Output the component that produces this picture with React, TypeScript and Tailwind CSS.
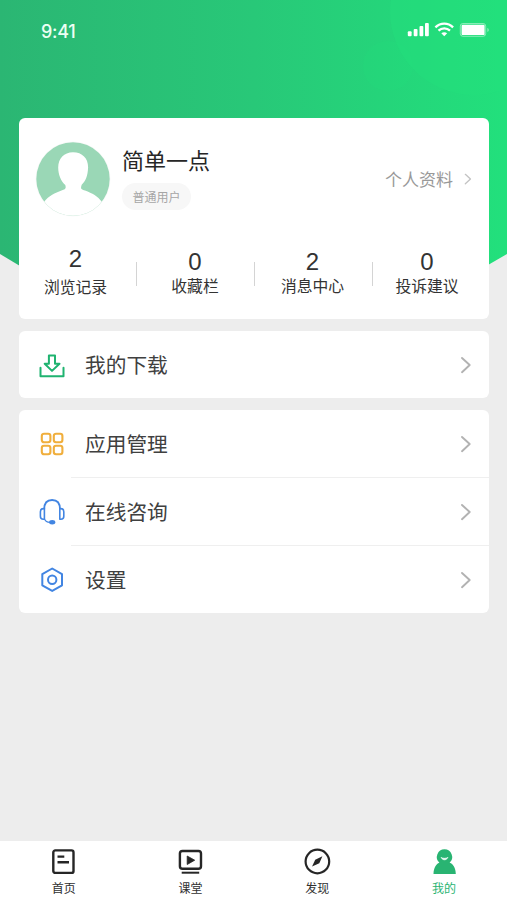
import React from "react";

function Backdrop() {
  return (
    <svg className="absolute left-0 top-0 h-[540px] w-[507px]" viewBox="0 0 507 540" fill="none">
      <defs>
        <linearGradient id="sky" x1="0" y1="0" x2="507" y2="0" gradientUnits="userSpaceOnUse">
          <stop offset="0" stopColor="#2bb673" />
          <stop offset="0.5" stopColor="#28c878" />
          <stop offset="1" stopColor="#22e07c" />
        </linearGradient>
      </defs>
      <path d="M0 0H507V254L488 265L254 300L20 266L0 254Z" fill="url(#sky)" />
      <circle cx="388" cy="66" r="25" fill="#22e07c" fillOpacity="0.2" />
      <circle cx="474" cy="11" r="84" fill="#22e07c" fillOpacity="0.4" />
    </svg>
  );
}

function StatusBar() {
  return (
    <div className="flex h-[118px] items-start justify-between pl-[41px] pr-[17px] pt-[20px] text-white">
      <span className="font-['Inter','Liberation_Sans',sans-serif] text-[18px] font-medium leading-[24px] tracking-[-0.3px] text-[#edfff4]">9:41</span>
      <svg className="mt-[2px] h-[16px] w-[83px]" viewBox="0 0 83 16" fill="currentColor">
        <rect x="0.8" y="9.3" width="3.8" height="5" rx="1" />
        <rect x="6.7" y="7" width="3.8" height="7.3" rx="1" />
        <rect x="12.5" y="4" width="3.8" height="10.3" rx="1" />
        <rect x="18" y="1" width="3.8" height="13.3" rx="1" />
        <g fill="none" stroke="currentColor" strokeWidth="2.3">
          <path d="M28.4 5.3C33.5 0.4 41 0.4 46.1 5.3" />
          <path d="M31.5 8.7C34.7 5.7 39.8 5.7 43 8.7" />
        </g>
        <path d="M34.3 11.3C36.1 9.8 38.4 9.8 40.2 11.3L37.25 14.2Z" />
        <rect x="53.3" y="1.5" width="25.4" height="12.8" rx="2.6" fill="none" stroke="currentColor" strokeOpacity="0.45" />
        <rect x="54.6" y="2.8" width="23" height="10.3" rx="1.2" />
        <path d="M80.3 5.7C82.4 6.8 82.4 9 80.3 10.1Z" opacity="0.45" />
      </svg>
    </div>
  );
}

function Avatar() {
  return (
    <svg className="h-[76px] w-[76px] shrink-0" viewBox="0 0 76 76">
      <defs>
        <clipPath id="face"><circle cx="38" cy="38" r="36.7" /></clipPath>
      </defs>
      <circle cx="38" cy="38" r="37" fill="#fff" stroke="#f7f7f7" strokeWidth="0.8" />
      <g clipPath="url(#face)">
        <rect width="76" height="76" fill="#9ad7b6" />
        <path d="M38 11.2C47.5 11.2 53.3 17.5 53.1 26.5C52.8 35 50.5 40 46.7 43.8C45.3 48 46 48 50 49.5C57.5 52.3 62.5 55 67 61V78H9V61C14 54.5 20 52 26.5 49.5C30.5 48 31.3 47.5 30.3 44C26 40 23.2 34 23.2 26.5C23.2 17.5 29 11.2 38 11.2Z" fill="#fff" />
      </g>
    </svg>
  );
}

function Chevron({ small = false }: { small?: boolean }) {
  return (
    <svg
      className={small ? "h-[12px] w-[8px]" : "h-[18px] w-[12px]"}
      viewBox="0 0 12 18"
      fill="none"
      stroke={small ? "#c3c3c3" : "#b2b2b2"}
      strokeWidth={small ? 2 : 1.9}
      strokeLinecap="round"
      strokeLinejoin="round"
    >
      <path d="M2 2L9.7 9L2 16.2" />
    </svg>
  );
}

function DownloadIcon() {
  return (
    <svg className="h-[28px] w-[28px]" viewBox="0 0 28 28" fill="none" stroke="#1fb370" strokeWidth="2" strokeLinejoin="round" strokeLinecap="round">
      <path d="M10.9 4.5H17V12.7H21.5L14 19.9L6.7 12.7H10.9Z" />
      <path d="M2.5 16.8V25.3H25.5V16.8" />
    </svg>
  );
}

function AppsIcon() {
  return (
    <svg className="h-[28px] w-[28px]" viewBox="0 0 28 28" fill="none" stroke="#f0ae3c" strokeWidth="2.1">
      <rect x="3.8" y="3.7" width="8.6" height="8.6" rx="2.2" />
      <rect x="15.8" y="3.7" width="8.6" height="8.6" rx="2.2" />
      <rect x="3.8" y="15.7" width="8.6" height="8.6" rx="2.2" />
      <rect x="15.8" y="15.7" width="8.6" height="8.6" rx="2.2" />
    </svg>
  );
}

function HeadsetIcon() {
  return (
    <svg className="h-[28px] w-[28px]" viewBox="0 0 28 28" fill="none" stroke="#4285e2" strokeWidth="1.8">
      <path d="M6.2 11.3C6.2 5.3 9.3 2 14.1 2C18.9 2 22 5.3 22 11.3" />
      <path d="M6.4 10.6V21.2H5.3C3.3 21.2 2.4 20 2.4 18.2V13.8C2.4 11.8 3.3 10.6 5.3 10.6ZM21.8 10.6V21.2H22.9C24.9 21.2 25.8 20 25.8 18.2V13.8C25.8 11.8 24.9 10.6 22.9 10.6Z" strokeWidth="1.6" strokeLinejoin="round" />
      <path d="M6.5 21C7.2 23 9 24.3 12 24.3" strokeWidth="1.2" />
      <ellipse cx="14.2" cy="24.2" rx="3.1" ry="2.2" fill="#4285e2" stroke="none" />
    </svg>
  );
}

function SettingsIcon() {
  return (
    <svg className="h-[28px] w-[28px]" viewBox="0 0 28 28" fill="none" stroke="#4285e2" strokeWidth="2" strokeLinejoin="round">
      <path d="M14.2 2.5L24 8.2V19.3L14.2 24.9L4.3 19.3V8.2Z" />
      <circle cx="14.2" cy="13.7" r="4.2" />
    </svg>
  );
}

function Row({ icon, label, divider = false }: { icon: React.ReactNode; label: string; divider?: boolean }) {
  return (
    <div className="flex h-[68px] pl-[19px]">
      <div className="flex w-[33px] items-center">{icon}</div>
      <div className={`flex flex-1 items-center justify-between pl-[14px] pr-[17px] ${divider ? "border-b border-[#efefef]" : ""}`}>
        <span className="pb-[2px] text-[20.7px] leading-[30px] text-[#404040]">{label}</span>
        <Chevron />
      </div>
    </div>
  );
}

const stats = [
  { value: "2", label: "浏览记录", box: "w-[118px] pr-[5px] pt-[6px]", number: "mb-[3px]" },
  { value: "0", label: "收藏栏", box: "w-[118px] pr-[2px] pt-[9px]", number: "-mb-px" },
  { value: "2", label: "消息中心", box: "w-[118px] pr-[3px] pt-[9px]", number: "-mb-px" },
  { value: "0", label: "投诉建议", box: "w-[116px] pr-[8px] pt-[9px]", number: "-mb-px" },
];

function HomeIcon() {
  return (
    <svg className="h-[28px] w-[28px]" viewBox="0 0 28 28" fill="none" stroke="#262626" strokeWidth="2.4">
      <rect x="4.3" y="3.4" width="20.2" height="22.5" rx="2" />
      <path d="M8.5 9.6H15.3M8.5 15.2H20" />
    </svg>
  );
}

function ClassIcon() {
  return (
    <svg className="h-[28px] w-[28px]" viewBox="0 0 28 28" fill="none" stroke="#262626" strokeWidth="2.4">
      <rect x="3.9" y="4" width="21.1" height="17.8" rx="2.6" />
      <path d="M5.7 25.7H23.2" strokeWidth="2" />
      <path d="M11.2 9L18.7 13.2L11.2 17.5Z" fill="#262626" stroke="#262626" strokeWidth="0.8" strokeLinejoin="round" />
    </svg>
  );
}

function CompassIcon() {
  return (
    <svg className="h-[28px] w-[28px]" viewBox="0 0 28 28" fill="none" stroke="#262626" strokeWidth="2.2">
      <circle cx="14.4" cy="14.5" r="11.8" />
      <path d="M19.4 9.3L16.3 16.3L9.1 19.6L12.2 12.8Z" fill="#262626" stroke="none" />
    </svg>
  );
}

function MeIcon() {
  return (
    <svg className="h-[28px] w-[28px]" viewBox="0 0 28 28" fill="#29b472">
      <path d="M14.5 2.2A7.7 7.7 0 0 1 19.6 15.6C23.2 17.3 25.6 20.7 25.8 26.9H3.5C3.7 20.7 6.1 17.3 9.4 15.6A7.7 7.7 0 0 1 14.5 2.2Z" />
      <path d="M11 10.4C12.9 13.6 16.1 13.6 18 10.4C15.7 11.6 13.3 11.6 11 10.4Z" fill="#fff" stroke="#fff" strokeWidth="0.6" />
    </svg>
  );
}

const tabs = [
  { label: "首页", icon: <HomeIcon />, color: "text-[#303030]" },
  { label: "课堂", icon: <ClassIcon />, color: "text-[#303030]" },
  { label: "发现", icon: <CompassIcon />, color: "text-[#303030]" },
  { label: "我的", icon: <MeIcon />, color: "text-[#29b472]" },
];

export default function App() {
  return (
    <div className="relative h-[900px] w-[507px] overflow-hidden bg-[#ededed] font-['Noto_Sans_CJK_SC',sans-serif]">
      <Backdrop />
      <div className="relative flex h-full flex-col">
        <StatusBar />
        <main className="flex flex-1 flex-col gap-[12px] pl-[19px] pr-[18px]">
          <section className="flex h-[201px] flex-col rounded-[6px] bg-white">
            <div className="flex h-[121px] items-center pl-[16px] pr-[17px]">
              <Avatar />
              <div className="-mt-[5px] ml-[11px] flex flex-col items-start gap-[8px]">
                <h1 className="text-[22px] font-normal leading-[32px] text-[#262626]">简单一点</h1>
                <span className="flex h-[27px] w-[69px] items-center justify-center rounded-full bg-[#f7f7f7] pt-px text-[12px] text-[#a6a6a6]">普通用户</span>
              </div>
              <div className="ml-auto flex items-center gap-[11px] text-[17px] text-[#999]">
                <span>个人资料</span>
                <Chevron small />
              </div>
            </div>
            <div className="flex">
              {stats.map((s, i) => (
                <div key={s.label} className="flex items-start">
                  <div className={`flex flex-col items-center text-[#333] ${s.box}`}>
                    <span className={`font-['Liberation_Sans',sans-serif] text-[24px] leading-[28px] ${s.number}`}>{s.value}</span>
                    <span className="text-[15.8px] leading-[22px]">{s.label}</span>
                  </div>
                  {i < 3 && <div className="-ml-px mt-[23px] h-[24px] w-px bg-[#d4d4d4]" />}
                </div>
              ))}
            </div>
          </section>
          <section className="h-[67px] rounded-[6px] bg-white">
            <Row icon={<DownloadIcon />} label="我的下载" />
          </section>
          <section className="h-[203px] rounded-[6px] bg-white">
            <Row icon={<AppsIcon />} label="应用管理" divider />
            <Row icon={<HeadsetIcon />} label="在线咨询" divider />
            <Row icon={<SettingsIcon />} label="设置" />
          </section>
        </main>
        <nav className="grid h-[59px] grid-cols-4 bg-white">
          {tabs.map((t) => (
            <div key={t.label} className={`flex flex-col items-center pt-[6px] ${t.color}`}>
              {t.icon}
              <span className="mt-[4px] pl-px text-[12px] leading-[18px]">{t.label}</span>
            </div>
          ))}
        </nav>
      </div>
    </div>
  );
}
